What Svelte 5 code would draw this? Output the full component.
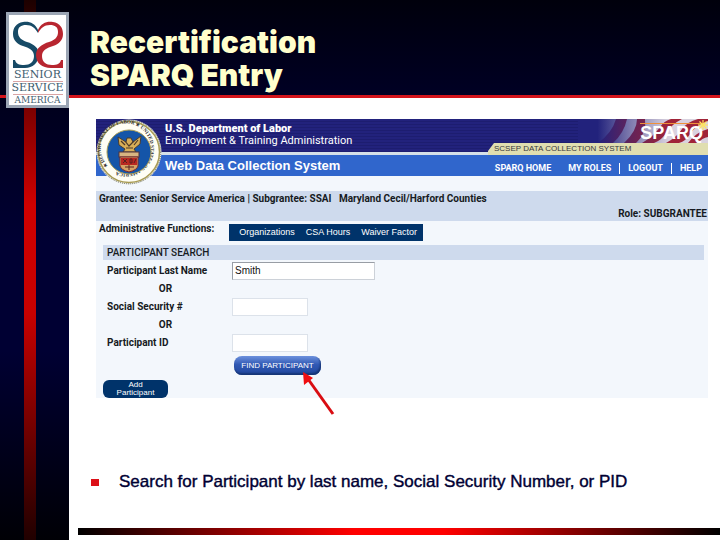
<script>
  let lastName = $state('Smith');
  let ssn = $state('');
  let pid = $state('');
  const stars = [0, 45, 90, 135];
</script>

<div class="slide">
  <aside class="rail">
    <div class="stripe"></div>
    <div class="rule"></div>
    <div class="logo">
      <svg viewBox="0 0 52 48" width="52" height="48" aria-hidden="true">
        <path d="M26 9C23 2 17 0 11 1C4 2 1 7 1 13C1 19 5 23 11 25C17 27 22 29 22 35C22 41 18 44 12 44C7 44 4 43 3 39H1V47H13C21 47 26 42 27 34C27 27 22 23 15 21C9 19 6 16 6 11C6 6 9 4 14 4C20 4 23 7 26 12Z" fill="#174a66" />
        <path d="M26 9C29 2 35 0 41 1C48 2 51 7 51 13C51 19 47 23 41 25C35 27 30 29 30 35C30 41 34 44 40 44C45 44 48 43 49 39H51V47H39C30 47 24 42 24 34C24 27 30 23 37 21C43 19 46 16 46 11C46 6 43 4 38 4C32 4 29 7 26 12Z" fill="#b82630" />
      </svg>
      <span class="word big">SENIOR</span>
      <span class="word big">SERVICE</span>
      <span class="word small">AMERICA</span>
    </div>
  </aside>

  <div class="content">
    <header class="title"><h1>Recertification<br />SPARQ Entry</h1></header>

    <main>
      <section class="app">
        <div class="banner">
          <svg class="seal" viewBox="0 0 66 66" width="66" height="66" aria-hidden="true">
            <defs><path id="ring" d="M12 47A25 25 0 1 1 12.1 47.1" /></defs>
            <circle cx="33" cy="33" r="32.500" fill="#f7f5e4" />
            <circle cx="33" cy="33" r="30.500" fill="#fffef4" stroke="#a99c54" stroke-width="1.500" />
            <circle cx="33" cy="33" r="31.800" fill="none" stroke="#39434b" stroke-width=".8" stroke-dasharray="1 1" />
            <text class="seal-text"><textPath href="#ring">★ DEPARTMENT OF LABOR ★ UNITED STATES OF AMERICA</textPath></text>
            <circle cx="33" cy="33" r="22" fill="#1555a8" stroke="#a99c54" />
            <path d="M22 18L30 23L31 19H35L37 23L45 17L44 25L38 30L40 33H27L29 30L23 26Z" fill="#d7ae57" stroke="#453b32" stroke-width="1" />
            <path d="M29 22L33 27L38 22M30 29H37M25 22L29 26M42 21L38 26" fill="none" stroke="#4c3829" stroke-width="1.200" />
            <rect x="23" y="33" width="20" height="5" fill="#d8b581" stroke="#51323b" />
            <path d="M24 38H42V47Q41 51 33 53Q25 51 24 47Z" fill="#d5a265" stroke="#7e292b" />
            <path d="M25 39H41V46H25Z" fill="#b92822" />
            <path d="M27 40L31 44M31 40L27 44M34 40V44H36V40ZM38 44L40 40M29 48H38M33 46V51" fill="none" stroke="#562121" />
          </svg>
          <div class="top">
            <div class="dept"><strong>U.S. Department of Labor</strong><span>Employment &amp; Training Administration</span></div>
            <div class="brand">
              <svg class="flag" viewBox="0 0 130 24" preserveAspectRatio="none" aria-hidden="true">
                <defs>
                  <linearGradient id="fade"><stop offset=".15" stop-color="#22227c" /><stop offset=".4" stop-color="#22227c" stop-opacity=".5" /><stop offset=".7" stop-color="#22227c" stop-opacity="0" /></linearGradient>
                </defs>
                <rect width="130" height="24" fill="#d9d2df" />
                <path d="M20 24Q34 14 38 0H49Q46 14 35 24ZM46 24Q59 12 59 0H67Q69 14 58 24ZM64 24Q76 17 82 8Q86 2 93 0H104Q94 5 88 14Q84 21 76 24ZM88 24Q99 18 104 10Q109 3 120 0H130V2Q117 7 112 15Q108 22 101 24ZM110 24Q118 13 130 10V18Q124 19 120 24Z" fill="#a02438" />
                <rect width="130" height="24" fill="url(#fade)" />
              </svg>
              <span class="sparq">SPARQ</span>
              <svg class="spark" viewBox="0 0 10 10" width="10" height="10" aria-hidden="true">
                {#each stars as angle}<path d="M5 0V10" stroke="#ffe45d" stroke-width="1.200" transform="rotate({angle} 5 5)" />{/each}
              </svg>
            </div>
            <div class="tab">SCSEP DATA COLLECTION SYSTEM</div>
          </div>
          <div class="nav">
            <strong>Web Data Collection System</strong>
            <nav>
              <a class="home" href="#home">SPARQ HOME</a><a href="#roles">MY ROLES</a><a href="#logout">LOGOUT</a><a href="#help">HELP</a>
            </nav>
          </div>
        </div>

        <div class="grantee">
          <span>Grantee: Senior Service America | Subgrantee: SSAI &nbsp; Maryland Cecil/Harford Counties</span>
          <span class="role">Role: SUBGRANTEE</span>
        </div>

        <div class="admin">
          <span>Administrative Functions:</span>
          <nav><a href="#org">Organizations</a><a href="#csa">CSA Hours</a><a href="#waiver">Waiver Factor</a></nav>
        </div>

        <form onsubmit={(e) => e.preventDefault()}>
          <h2>PARTICIPANT SEARCH</h2>
          <div class="field"><label for="last">Participant Last Name</label><input id="last" class="wide" type="text" bind:value={lastName} /></div>
          <div class="or">OR</div>
          <div class="field"><label for="ssn">Social Security #</label><input id="ssn" type="text" bind:value={ssn} /></div>
          <div class="or">OR</div>
          <div class="field"><label for="pid">Participant ID</label><input id="pid" type="text" bind:value={pid} /></div>
          <button class="find" type="submit">FIND PARTICIPANT</button>
          <button class="add" type="button">Add<br />Participant</button>
        </form>

        <svg class="arrow" viewBox="0 0 34 44" width="34" height="44" aria-hidden="true">
          <path d="M32 42L7 7" stroke="#d90d12" stroke-width="3" />
          <path d="M2 0L12 6L3 13Z" fill="#f00d10" />
        </svg>
      </section>

      <ul><li>Search for Participant by last name, Social Security Number, or PID</li></ul>
    </main>
    <footer></footer>
  </div>
</div>

<style>
  :global(body) { margin: 0; background: #fff; }
  .slide { display: grid; grid-template-columns: 69px minmax(0, 1fr); min-height: 100vh; font-family: "Liberation Sans", Arial, sans-serif; }
  .rail { position: relative; background: linear-gradient(#00000c, #000033 45%, #000033 65%, #000005); }
  .stripe { width: 12px; height: 100%; margin-left: 24px; background: linear-gradient(#1c0000, #d00000 38%, #c80000 58%, #200000); }
  .rule { position: absolute; top: 95px; left: 0; right: 0; height: 3px; background: #d4141b; }
  .logo { position: absolute; top: 12px; left: 6px; box-sizing: border-box; width: 63px; height: 96px; border: 3px solid #9ba5b4; background: #fff; display: flex; flex-direction: column; align-items: center; padding-top: 6px; font-family: "DejaVu Serif", serif; color: #3f6070; }
  .word { box-sizing: border-box; width: 50px; display: flex; justify-content: center; white-space: nowrap; }
  .big { font-size: 11px; line-height: 12px; border-bottom: 1px solid #d9a5a5; }
  .small { font-size: 9px; line-height: 10px; }
  .logo svg { flex: none; }
  .content { display: flex; flex-direction: column; min-width: 0; }
  .title { box-sizing: border-box; height: 98px; border-bottom: 3px solid #d4141b; background: linear-gradient(#00000c, #000024); padding: 26px 0 0 21px; }
  h1 { margin: 0; font: 900 30px/33px Inter, "Liberation Sans", sans-serif; color: #ffffcc; }
  main { flex: 1; padding: 21px 12px 0 27px; }
  .app { position: relative; background: #f3f7fc; height: 279px; font: bold 10px/12px Roboto, "Liberation Sans", sans-serif; color: #161a22; }
  .banner { position: relative; color: #fff; }
  .seal { position: absolute; left: 0; top: 0; z-index: 1; }
  .seal-text { font: bold 5px "Liberation Serif", serif; fill: #303038; }
  .top { display: grid; grid-template-columns: 1fr 220px; grid-template-rows: 24px 12px; background: repeating-linear-gradient(#22227c 0 2px, #1d1d70 2px 3px); }
  .dept { grid-row: 1 / 3; display: flex; flex-direction: column; padding: 4px 0 0 69px; font-size: 11px; line-height: 12px; border-bottom: 3px solid #d5e0e8; white-space: nowrap; }
  .dept span { font-weight: 400; }
  .brand { position: relative; display: flex; justify-content: flex-end; }
  .flag { position: absolute; right: 0; width: 130px; height: 24px; }
  .sparq { position: relative; margin: 4px 5px 0 0; height: 18px; border-top: 1px solid #ef913b; font: bold 18px/18px "Liberation Sans", sans-serif; color: #fff; }
  .spark { position: absolute; right: 0; top: 1px; }
  .tab { background: #e0deb0; color: #38383d; font: 8px/12px "Liberation Sans", sans-serif; padding-left: 6px; clip-path: polygon(6px 0, 100% 0, 100% 100%, 0 100%, 0 8px); white-space: nowrap; }
  .nav { display: flex; justify-content: space-between; align-items: center; height: 21px; padding-left: 69px; background: #3066cc; }
  .nav strong { font: bold 13px/20px "Liberation Sans", sans-serif; white-space: nowrap; }
  nav { display: flex; }
  nav a { color: #fff; text-decoration: none; white-space: nowrap; }
  .nav nav a { font: bold 9px/11px Roboto, sans-serif; padding: 0 8px; border-left: 1px solid #fff; margin-top: 5px; }
  .nav nav a:nth-child(-n+2) { border-left-color: transparent; }
  .nav nav a:last-child { padding-right: 6px; }
  .grantee { display: flex; flex-direction: column; justify-content: space-between; box-sizing: border-box; height: 30px; margin-top: 15px; padding: 2px 1px 1px 3px; background: #cedaed; white-space: nowrap; }
  .role { align-self: flex-end; }
  .admin { display: flex; height: 24px; padding-left: 3px; }
  .admin span { width: 130px; line-height: 16px; white-space: nowrap; }
  .admin nav { box-sizing: border-box; width: 194px; height: 17px; margin-top: 3px; padding: 0 6px; background: #00336a; gap: 11px; justify-content: flex-end; font: 9px/17px "Liberation Sans", sans-serif; }
  form { display: flex; flex-direction: column; align-items: flex-start; padding: 0 4px 0 7px; }
  h2 { box-sizing: border-box; width: 100%; height: 15px; margin: 0 0 1px; padding-left: 4px; background: #cedaed; font: 500 10px/15px Roboto, sans-serif; }
  .field { display: flex; align-items: center; height: 19px; }
  .field label { width: 125px; padding-left: 4px; white-space: nowrap; }
  input { box-sizing: border-box; width: 76px; height: 18px; border: 1px solid #dce2ea; background: #fff; padding: 0 2px; font: 10px/16px "Liberation Sans", sans-serif; color: #111; }
  input.wide { width: 143px; border-color: #989da5 #ccd1d8 #ccd1d8 #989da5; }
  .or { height: 17px; width: 125px; line-height: 17px; text-align: center; }
  button { border: 0; padding: 0; color: #fff; white-space: nowrap; }
  .find { width: 87px; height: 19px; margin: 4px 0 0 131px; border-radius: 8px; background: linear-gradient(#6c91dd, #3159b4 45%, #20479e); box-shadow: inset -1px -2px 2px #173675; font: 8px/17px "Liberation Sans", sans-serif; }
  .add { width: 65px; height: 18px; margin-top: 5px; border-radius: 6px; background: #00336a; font: 8px/8px "Liberation Sans", sans-serif; }
  .arrow { position: absolute; left: 205px; top: 253px; }
  ul { list-style: none; margin: 74px 0 0; padding: 0; }
  li { display: flex; align-items: center; gap: 20px; margin-left: -5px; font-size: 17px; line-height: 20px; color: #000033; -webkit-text-stroke: .4px #000033; white-space: nowrap; }
  li::before { content: ""; width: 8px; height: 7px; background: #dc1018; }
  footer { height: 7px; margin: 0 0 5px 9px; background: linear-gradient(90deg, #000, #f00 43%, #f00 57%, #000); }
</style>
